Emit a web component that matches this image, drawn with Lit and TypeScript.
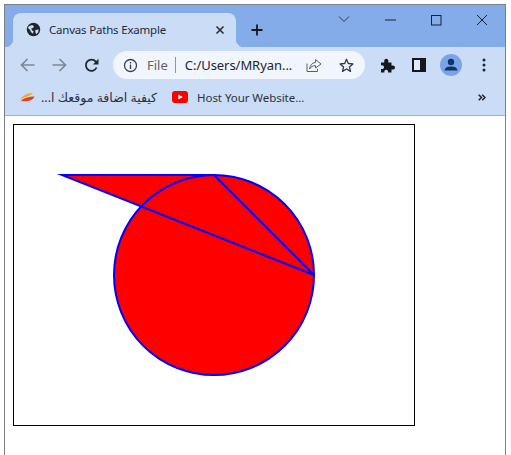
import { LitElement, html, css, svg } from "lit";
import { customElement } from "lit/decorators.js";

@customElement("app-root")
export class AppRoot extends LitElement {
  static styles = css`
    :host { display: block; width: 511px; height: 455px; overflow: hidden; background: #fff; font-family: "Noto Sans", "Open Sans", sans-serif; }
    svg { display: block; flex: none; }
    .window { margin: 4px 5px 0 4px; height: 451px; box-sizing: border-box; border: 1px solid #7c7f85; border-bottom: 0; display: flex; flex-direction: column; }
    .tabstrip { height: 42px; flex: none; background: #84ace9; display: flex; align-items: flex-end; padding-left: 8px; position: relative; }
    .tab { width: 223px; height: 34px; box-sizing: border-box; background: #cbdcf7; border-radius: 8px 8px 0 0; display: flex; align-items: center; padding: 0 0 1px 13px; color: #1f2a3a; font-size: 11.5px; position: relative; }
    .tab .title { margin-left: 8px; flex: 1; white-space: nowrap; letter-spacing: -0.2px; }
    .tab .close { margin-right: 11px; }
    .tab::before, .tab::after { content: ""; position: absolute; bottom: 0; width: 8px; height: 8px; }
    .tab::before { left: -8px; background: radial-gradient(circle at 0 0, transparent 8px, #cbdcf7 8.5px); }
    .tab::after { right: -8px; background: radial-gradient(circle at 100% 0, transparent 8px, #cbdcf7 8.5px); }
    .plus { margin: 0 0 11px 15px; }
    .chev { position: absolute; left: 333px; top: 10px; }
    .min { position: absolute; left: 380px; top: 14px; }
    .max { position: absolute; left: 426px; top: 10px; }
    .x { position: absolute; left: 471px; top: 9px; }
    .toolbar { height: 36px; flex: none; background: #cbdcf7; display: flex; align-items: center; padding: 0 0 0 15px; position: relative; }
    .nav { display: flex; align-items: center; gap: 17px; }
    .omni { width: 252px; height: 28px; margin-left: 14px; box-sizing: border-box; background: #f1f6fd; border-radius: 14px; display: flex; align-items: center; padding-left: 10px; font-size: 13px; color: #20242b; white-space: nowrap; }
    .file { margin-left: 9px; color: #5f6368; }
    .sep { width: 1px; height: 16px; background: #8b97a8; margin: 0 9px 0 7px; }
    .url { flex: 1; letter-spacing: -0.05px; }
    .share { margin-right: 17px; }
    .star { margin-right: 11px; }
    .tools { display: flex; align-items: center; margin-left: 15px; }
    .puzzle { margin-right: 17px; }
    .panel { margin-right: 14px; }
    .avatar { width: 22px; height: 22px; }
    .dots { margin-left: 20px; }
    .bookmarks { height: 33px; flex: none; box-sizing: border-box; background: #cbdcf7; border-bottom: 1px solid #a3b1c6; display: flex; align-items: center; padding: 0 0 4px 15px; font-size: 11.5px; color: #2a3240; white-space: nowrap; position: relative; }
    .ar { margin-left: 7px; width: 115px; font-family: "Noto Sans", "DejaVu Sans", sans-serif; direction: rtl; font-size: 12.5px; unicode-bidi: plaintext; text-align: left; }
    .yt { margin-left: 15px; }
    .host { margin-left: 9px; flex: 1; letter-spacing: -0.05px; }
    .more { margin-right: 19px; }
    .page { flex: 1; background: #fff; padding: 8px 0 0 8px; }
    .canvas { border: 1px solid #000; width: 400px; height: 300px; display: block; }
  `;

  render() {
    return html`<div class="window">
      <div class="tabstrip">
        <div class="tab">
          <svg width="15" height="15" viewBox="0 0 16 16"><circle cx="8" cy="8" r="7.2" fill="#20242c"/><path d="M3 4.5 L6.5 3.2 L8.5 4.5 L7.5 6.5 L5.5 6.8 L6.5 9 L8 9.5 L7.5 12.5 L5.5 11 L4 8 L2 6.5Z M10 8.5 L13.5 8 L13 11 L10.8 13 L10 11Z" fill="#cbdcf7"/></svg>
          <span class="title">Canvas Paths Example</span>
          <svg class="close" width="10" height="10" viewBox="0 0 10 10"><path d="M1.5 1.5L8.5 8.5M8.5 1.5L1.5 8.5" stroke="#2b2f36" stroke-width="1.6"/></svg>
        </div>
        <svg class="plus" width="12" height="12" viewBox="0 0 12 12"><path d="M6 0.5V11.5M0.5 6H11.5" stroke="#15181d" stroke-width="1.8"/></svg>
        <svg class="chev" width="12" height="8" viewBox="0 0 12 8"><path d="M1 1.5L6 6.5L11 1.5" fill="none" stroke="#2d3a52" stroke-width="1"/></svg>
        <svg class="min" width="11" height="2" viewBox="0 0 11 2"><path d="M0 1H11" stroke="#1b2330" stroke-width="1"/></svg>
        <svg class="max" width="11" height="11" viewBox="0 0 11 11"><rect x="0.5" y="0.5" width="9.5" height="9.5" fill="none" stroke="#1b2330" stroke-width="1"/></svg>
        <svg class="x" width="12" height="12" viewBox="0 0 12 12"><path d="M1 1L11 11M11 1L1 11" stroke="#1b2330" stroke-width="1"/></svg>
      </div>
      <div class="toolbar">
        <div class="nav">
          <svg width="15" height="14" viewBox="0 0 15 14"><path d="M14.5 7H1.8M7.5 1L1.5 7L7.5 13" fill="none" stroke="#7f8794" stroke-width="1.7"/></svg>
          <svg width="15" height="14" viewBox="0 0 15 14"><path d="M0.5 7H13.2M7.5 1L13.5 7L7.5 13" fill="none" stroke="#7f8794" stroke-width="1.7"/></svg>
          <svg width="15" height="15" viewBox="0 0 15 15"><path d="M12.6 9.5A5.6 5.6 0 1 1 11.8 3.6L13.2 5" fill="none" stroke="#23272e" stroke-width="1.8"/><path d="M14.5 0.8V6.4H8.9Z" fill="#23272e"/></svg>
        </div>
        <div class="omni">
          <svg width="15" height="15" viewBox="0 0 15 15"><circle cx="7.5" cy="7.5" r="6" fill="none" stroke="#3e434b" stroke-width="1.3"/><path d="M7.5 6.6V11M7.5 4V5.4" stroke="#3e434b" stroke-width="1.4"/></svg>
          <span class="file">File</span><span class="sep"></span>
          <span class="url">C:/Users/MRyan...</span>
          <svg class="share" width="16" height="15" viewBox="0 0 16 15"><path d="M1 5.5V13.5H11.5V11" fill="none" stroke="#5b6068" stroke-width="1"/><path d="M9.5 1.5L15 6L9.5 10V7.6C7 7.6 5 8.6 3.6 11C4 7.4 6 4.8 9.5 4.4Z" fill="none" stroke="#5b6068" stroke-width="1"/></svg>
          <svg class="star" width="15" height="15" viewBox="0 0 15 15"><path d="M7.5 1.3L9.3 5.5L13.9 5.9L10.4 8.9L11.5 13.4L7.5 11L3.5 13.4L4.6 8.9L1.1 5.9L5.7 5.5Z" fill="none" stroke="#33373e" stroke-width="1.3" stroke-linejoin="round"/></svg>
        </div>
        <div class="tools">
          <svg class="puzzle" width="15" height="15" viewBox="0 0 15 15"><path d="M1 4.5H4.3C3.7 2 5 .8 6.3 .8S8.9 2 8.3 4.5H11.5V7.6C14 7 15 8.2 15 9.5S14 12 11.5 11.4V14.5H8C8.4 12.6 7.4 11.8 6.2 11.8S4 12.6 4.4 14.5H1V11C3 11.4 4 10.4 4 9.2S3 7 1 7.5Z" fill="#14171c"/></svg>
          <svg class="panel" width="14" height="14" viewBox="0 0 14 14"><rect width="14" height="14" fill="#14171c"/><rect x="2" y="2" width="6" height="10" fill="#dfe9fa"/></svg>
          <svg class="avatar" viewBox="0 0 22 22"><circle cx="11" cy="11" r="11" fill="#7ba4e6"/><circle cx="11" cy="8" r="3.2" fill="#0f3568"/><path d="M4.5 16.5C5 13 8 12.4 11 12.4S17 13 17.5 16.5Z" fill="#0f3568"/></svg>
          <svg class="dots" width="4" height="14" viewBox="0 0 4 14"><circle cx="2" cy="2" r="1.5" fill="#20242c"/><circle cx="2" cy="7" r="1.5" fill="#20242c"/><circle cx="2" cy="12" r="1.5" fill="#20242c"/></svg>
        </div>
      </div>
      <div class="bookmarks">
        <svg width="15" height="10" viewBox="0 0 15 10"><path d="M0.5 8C2 3.5 8 0.5 13 1C11 3 7 5 4 5.5Z" fill="#f0a81c"/><path d="M1 9C4 5.5 10 4.5 14.5 4.5C13.5 8 8 10 1 9Z" fill="#e2401f"/></svg>
        <span class="ar">كيفية اضافة موقعك ا...</span>
        <svg class="yt" width="16" height="12" viewBox="0 0 16 12"><rect width="16" height="12" rx="3" fill="#f00"/><path d="M6.3 3.4L10.8 6L6.3 8.6Z" fill="#fff"/></svg>
        <span class="host">Host Your Website...</span>
        <svg class="more" width="8" height="7" viewBox="0 0 8 7"><path d="M.7 .7L3.5 3.5L.7 6.3M4.2 .7L7 3.5L4.2 6.3" fill="none" stroke="#20242c" stroke-width="1.5"/></svg>
      </div>
      <div class="page">
        <svg class="canvas" viewBox="0 0 400 300" width="400" height="300">
          ${svg`<path d="M48 50H200L300 150Z" fill="#f00"/>
          <circle cx="200" cy="150" r="100" fill="#f00" stroke="#00f" stroke-width="2"/>
          <path d="M300 150L48 50H200L300 150" fill="none" stroke="#00f" stroke-width="2" stroke-miterlimit="10"/>`}
        </svg>
      </div>
    </div>`;
  }
}
